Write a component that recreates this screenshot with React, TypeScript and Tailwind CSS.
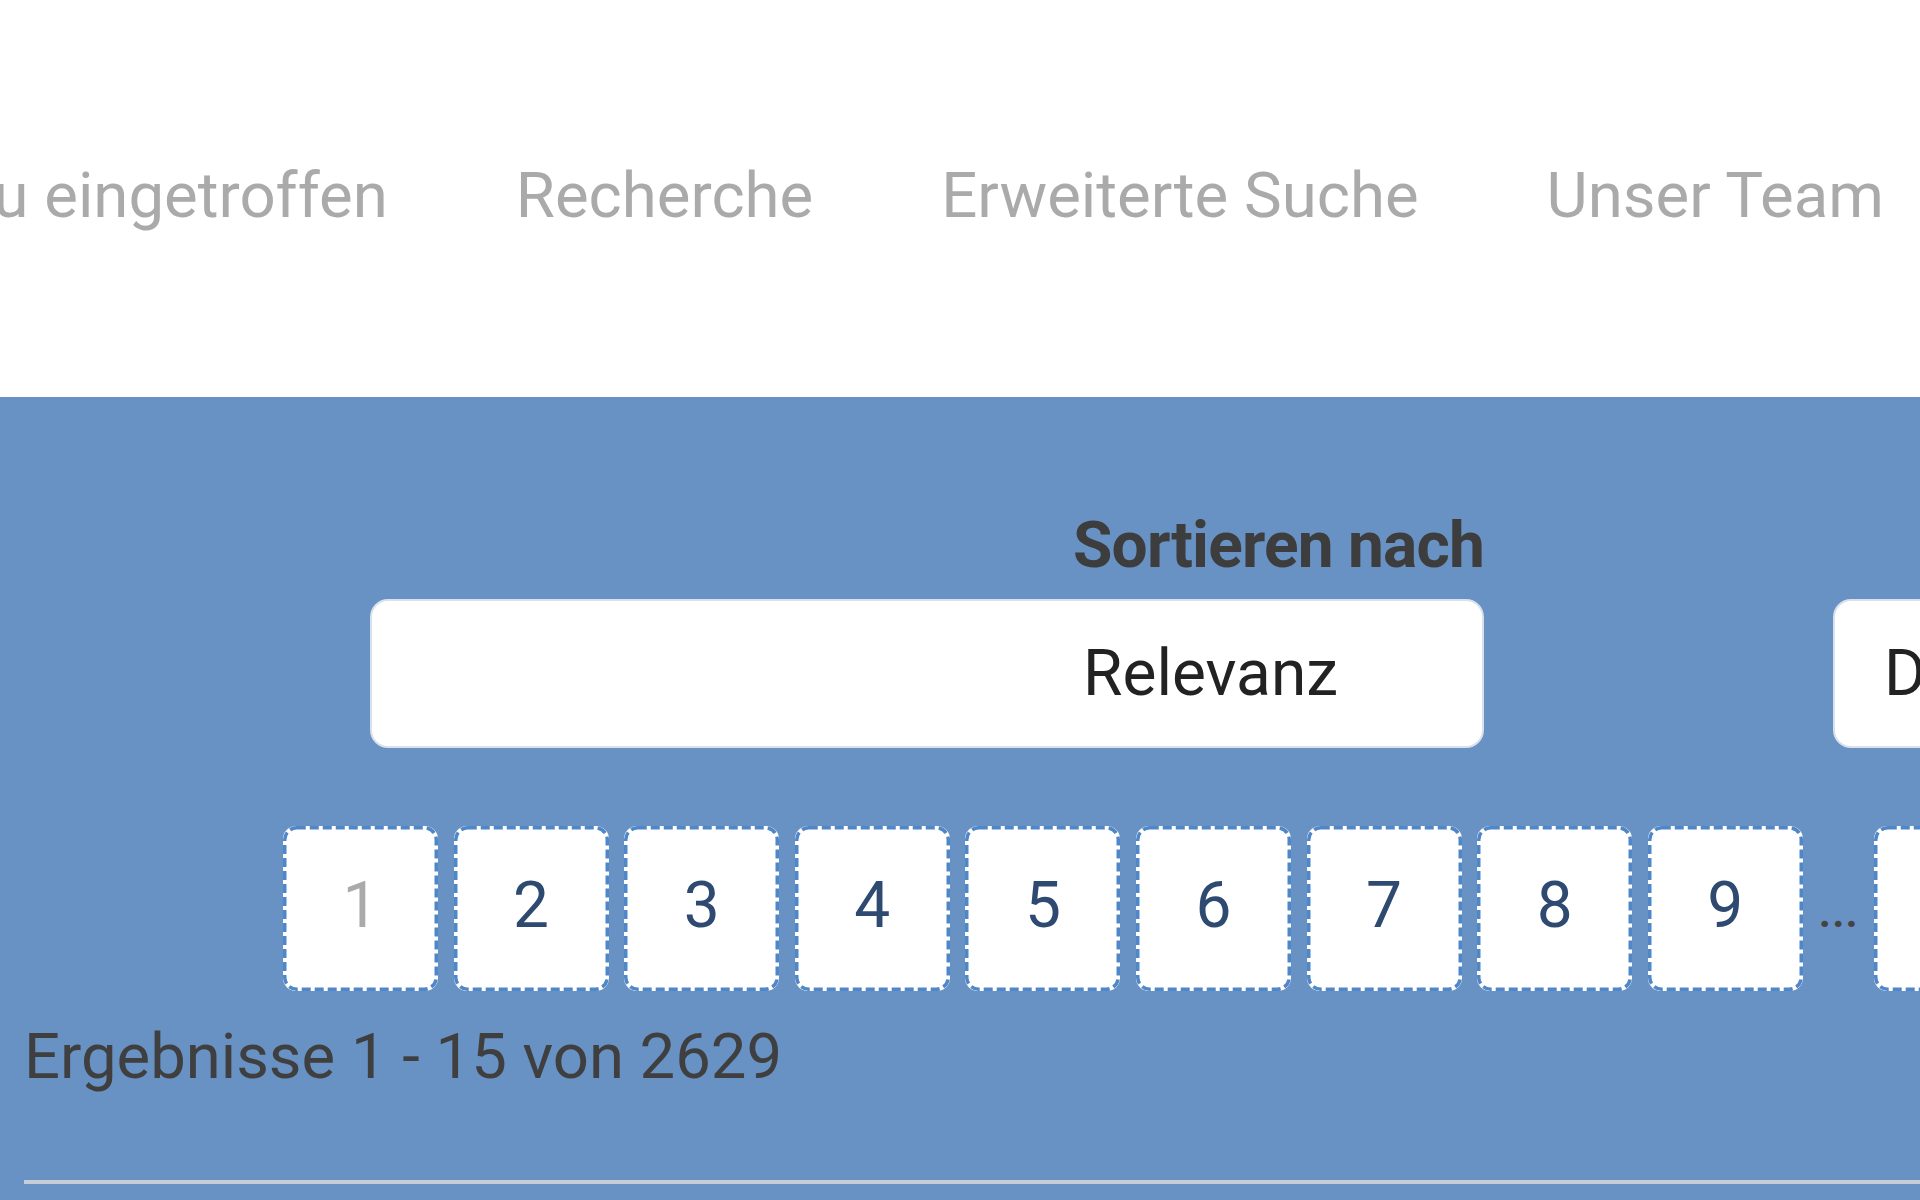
import React from "react";

const pages = [1, 2, 3, 4, 5, 6, 7, 8, 9];

function PageBox({ n, active }: { n?: number; active?: boolean }) {
  return (
    <div className="relative w-[155px] h-[165px] shrink-0 bg-white rounded-[13px] flex items-center justify-center pb-[5px]">
      <svg className="absolute inset-0 pointer-events-none" width="155" height="165" viewBox="0 0 155 165">
        <rect
          x="1.75"
          y="1.75"
          width="151.5"
          height="161.5"
          rx="12"
          ry="12"
          fill="none"
          stroke="#4f87c9"
          strokeWidth="3.5"
          strokeDasharray="9 4"
        />
      </svg>
      <span className={active ? "text-[#aaaaaa]" : "text-[#2e4a70]"}>{n ?? "\u00A0"}</span>
    </div>
  );
}

export default function App() {
  return (
    <div className="w-[1920px] h-[1200px] overflow-hidden font-['Roboto',sans-serif] text-[64px] leading-none">
      <nav className="h-[397px] bg-white flex justify-end gap-[128px] pr-[36px] pt-[164px] whitespace-nowrap text-[63.5px] text-[#aaaaaa] overflow-hidden">
        <a className="shrink-0">Neu eingetroffen</a>
        <a className="shrink-0">Recherche</a>
        <a className="shrink-0">Erweiterte Suche</a>
        <a className="shrink-0">Unser Team</a>
      </nav>
      <section className="h-[803px] bg-[#6891c4] pl-6 pt-[117px] overflow-hidden">
        <div className="flex gap-[349px] ml-[346px] whitespace-nowrap">
          <div className="w-[1114px] shrink-0 flex flex-col">
            <label className="text-right font-bold text-[#3d3d3d] tracking-[-0.8px]">Sortieren nach</label>
            <div className="mt-[21px] h-[149px] bg-white border-2 border-[#d9e1ea] rounded-[18px] flex items-center justify-end pr-[144px] text-[#222222]">
              Relevanz
            </div>
          </div>
          <div className="w-[1114px] shrink-0 flex flex-col">
            <label className="text-right font-bold text-[#3d3d3d]">Reihenfolge</label>
            <div className="mt-[21px] h-[149px] bg-white border-2 border-[#d9e1ea] rounded-[18px] flex items-center justify-start pl-[49px] text-[#222222]">
              Datum
            </div>
          </div>
        </div>
        <div className="mt-[78px] ml-[259px] flex items-baseline gap-[15.6px]">
          {pages.map((p) => (
            <PageBox key={p} n={p} active={p === 1} />
          ))}
          <span className="text-[48px] font-medium text-[#444444] shrink-0">...</span>
          <PageBox />
        </div>
        <div className="mt-[34px] text-[63.4px] text-[#3f3f3f] whitespace-nowrap">Ergebnisse 1 - 15 von 2629</div>
        <div className="mt-[92px] h-[4px] bg-[#c4cdd8]" />
      </section>
    </div>
  );
}
